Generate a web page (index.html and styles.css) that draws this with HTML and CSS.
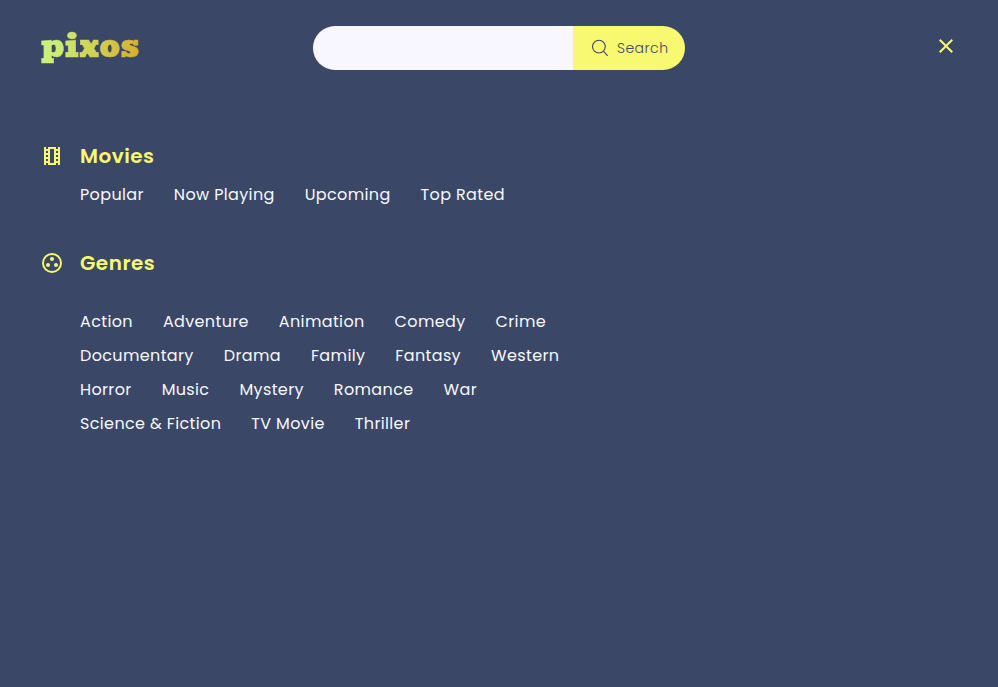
FILE: index.html
```html
<!DOCTYPE html>
<html lang="en">
<head>
<meta charset="utf-8">
<title>pixos</title>
<link rel="stylesheet" href="styles.css">
</head>
<body>
<header class="header">
  <a class="logo">pixos</a>
  <form class="search">
    <input class="search-input" type="text" aria-label="Search">
    <button class="search-button" type="button">
      <svg class="search-icon" viewBox="0 0 18 18"><circle cx="7.9" cy="7.6" r="6.4"/><path d="M12.4 12.2L16.7 16.8"/></svg>
      <span>Search</span>
    </button>
  </form>
  <svg class="icon close" viewBox="0 0 24 24"><path d="M19 6.41L17.59 5 12 10.59 6.41 5 5 6.41 10.59 12 5 17.59 6.41 19 12 13.41 17.59 19 19 17.59 13.41 12z"/></svg>
</header>
<main class="menu">
  <section class="section">
    <svg class="icon" viewBox="0 0 24 24"><path d="M18 3v2h-2V3H8v2H6V3H4v18h2v-2h2v2h8v-2h2v2h2V3h-2zM8 17H6v-2h2v2zm0-4H6v-2h2v2zm0-4H6V7h2v2zm6 10h-4V5h4v14zm4-2h-2v-2h2v2zm0-4h-2v-2h2v2zm0-4h-2V7h2v2z"/></svg>
    <h2 class="title">Movies</h2>
    <nav class="rows">
      <div class="row"><a>Popular</a><a>Now Playing</a><a>Upcoming</a><a>Top Rated</a></div>
    </nav>
  </section>
  <section class="section genres">
    <svg class="icon" viewBox="0 0 24 24"><circle class="ring" cx="12" cy="12" r="9"/><circle cx="8" cy="14" r="2"/><circle cx="12" cy="8" r="2"/><circle cx="16" cy="14" r="2"/></svg>
    <h2 class="title">Genres</h2>
    <nav class="rows">
      <div class="row"><a>Action</a><a>Adventure</a><a>Animation</a><a>Comedy</a><a>Crime</a></div>
      <div class="row"><a>Documentary</a><a>Drama</a><a>Family</a><a>Fantasy</a><a>Western</a></div>
      <div class="row"><a>Horror</a><a>Music</a><a>Mystery</a><a>Romance</a><a>War</a></div>
      <div class="row"><a>Science &amp; Fiction</a><a>TV Movie</a><a>Thriller</a></div>
    </nav>
  </section>
</main>
</body>
</html>
```
FILE: styles.css
```css
* { box-sizing: border-box; }

body {
  margin: 0;
  min-height: 100vh;
  background: #3a4766;
  color: #f8f7ff;
  font-family: Poppins, Inter, sans-serif;
  font-size: 16px;
  letter-spacing: 0.36px;
}

.header {
  display: grid;
  grid-template-columns: 272px 372px 1fr;
  height: 70px;
  padding: 26px 40px 0 41px;
}

.logo {
  justify-self: start;
  height: 44px;
  font: 400 32px/40px Bevan, "DejaVu Serif", serif;
  letter-spacing: 0.5px;
  color: transparent;
  -webkit-text-stroke: 0.5px transparent;
  background: linear-gradient(100deg, #cbef78 15%, #d6b02e 95%);
  -webkit-background-clip: text;
  background-clip: text;
}

.search {
  display: flex;
  height: 44px;
  border-radius: 22px;
  overflow: hidden;
}

.search-input {
  width: 260.4px;
  padding: 0 20px;
  border: 0;
  background: #f8f7ff;
}

.search-button {
  display: flex;
  flex: 1;
  align-items: center;
  gap: 8px;
  padding: 0 0 0 17.5px;
  border: 0;
  background: #f8f871;
  color: #3a4766;
  font: 300 14px/20px Poppins, Inter, sans-serif;
  letter-spacing: 0.5px;
  text-align: left;
}

.search-icon {
  width: 18px;
  height: 18px;
  fill: none;
  stroke: #3a4766;
  stroke-width: 1.1;
}

.icon {
  width: 24px;
  height: 24px;
  fill: #f8f871;
}

.ring {
  fill: none;
  stroke: #f8f871;
  stroke-width: 2;
}

.close {
  justify-self: end;
  margin-top: 8px;
}

.menu { padding: 71px 40px 0; }

.section {
  display: grid;
  grid-template-columns: 24px 1fr;
  column-gap: 16px;
  align-items: center;
}

.title {
  margin: 0;
  color: #f8f871;
  font-size: 20px;
  font-weight: 600;
  line-height: 30px;
  letter-spacing: 0.5px;
}

.rows {
  grid-column: 2;
  padding-top: 7px;
}

.row {
  display: flex;
  gap: 30px;
  height: 34px;
  line-height: 34px;
}

.genres { margin-top: 36px; }

.genres .rows { padding-top: 27px; }
```
